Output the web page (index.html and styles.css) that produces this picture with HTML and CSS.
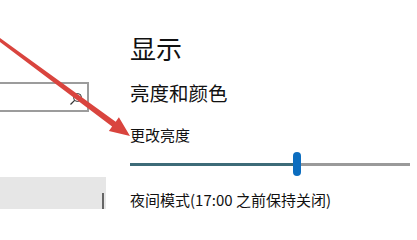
FILE: index.html
```html
<!DOCTYPE html>
<html lang="zh-CN">
<head>
<meta charset="utf-8">
<title>显示</title>
<link rel="stylesheet" href="styles.css">
</head>
<body>
<div class="window">
  <aside class="nav">
    <div class="search">
      <svg class="search-icon" width="14" height="14" viewBox="0 0 14 14">
        <circle cx="8.5" cy="5.5" r="4" fill="none" stroke="#333" stroke-width="1"/>
        <line x1="5.6" y1="8.4" x2="1.5" y2="12.5" stroke="#333" stroke-width="1.2"/>
      </svg>
    </div>
    <div class="nav-item">
      <div class="scrollbar"></div>
    </div>
  </aside>
  <main class="content">
    <h1 class="title">显示</h1>
    <h2 class="subtitle">亮度和颜色</h2>
    <div class="label">更改亮度</div>
    <div class="slider">
      <div class="track-fill"></div>
      <div class="thumb"></div>
      <div class="track-rest"></div>
    </div>
    <div class="label night">夜间模式(17:00 之前保持关闭)</div>
  </main>
</div>
<svg class="arrow" width="417" height="209" viewBox="0 0 417 209">
  <polygon fill="#d9443e" points="-3.1,35.8 115.7,121.7 118.9,117.3 130,136 108.9,130.9 112.1,126.5 -4.9,38.2"/>
</svg>
</body>
</html>
```

FILE: styles.css
```css
html, body {
  margin: 0;
  padding: 0;
  background: #ffffff;
}

body {
  width: 417px;
  height: 209px;
  overflow: hidden;
  position: relative;
  font-family: "Noto Sans CJK SC", "Noto Sans", sans-serif;
  color: #111111;
}

.window {
  display: flex;
  height: 209px;
}

.nav {
  width: 106px;
  flex: none;
  display: flex;
  flex-direction: column;
}

.search {
  margin-top: 82px;
  margin-left: -10px;
  width: 95px;
  height: 26px;
  border: 2px solid #9c9c9c;
  position: relative;
}

.search-icon {
  position: absolute;
  left: 77px;
  top: 8px;
}

.nav-item {
  margin-top: 65px;
  flex: 1;
  background: #e6e6e6;
  display: flex;
  justify-content: flex-end;
  align-items: flex-end;
  padding-right: 2px;
}

.scrollbar {
  width: 2px;
  height: 16px;
  background: #666666;
}

.content {
  flex: 1;
  padding-left: 24px;
  padding-right: 7px;
  display: flex;
  flex-direction: column;
}

.title {
  margin: 34.5px 0 0 0;
  font-size: 26px;
  font-weight: 400;
  line-height: 1;
  color: #111;
}

.subtitle {
  margin: 22.5px 0 0 0;
  font-size: 19.5px;
  font-weight: 400;
  line-height: 1;
}

.label {
  margin-top: 24px;
  font-size: 15px;
  line-height: 1;
}

.slider {
  margin-top: 10.5px;
  height: 24px;
  display: flex;
  align-items: center;
}

.track-fill {
  width: 163px;
  height: 3px;
  background: #3d6b78;
}

.thumb {
  width: 8px;
  height: 24px;
  border-radius: 4px;
  background: #0c6dbf;
  flex: none;
}

.track-rest {
  flex: 1;
  height: 3px;
  background: #9a9a9a;
}

.night {
  margin-top: 15.5px;
}

.arrow {
  position: absolute;
  left: 0;
  top: 0;
  pointer-events: none;
}
```
